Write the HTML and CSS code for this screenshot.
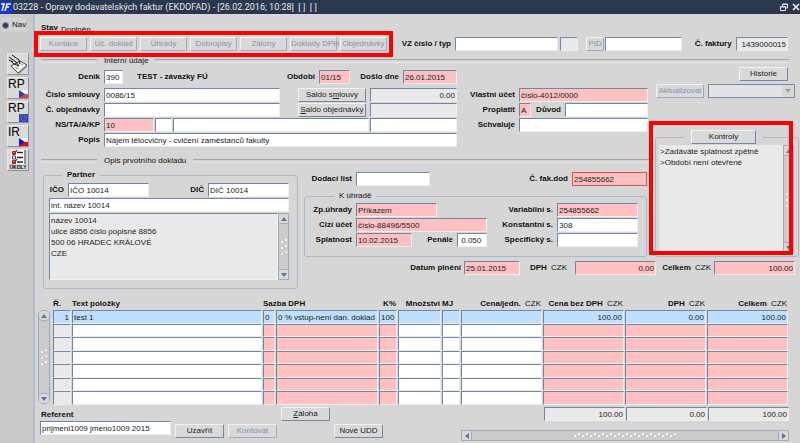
FILE: index.html
```html
<!DOCTYPE html>
<html lang="cs">
<head>
    <meta charset="UTF-8">
    <meta name="viewport" content="width=device-width, initial-scale=1.0">
    <title>Opravy dodavatelských faktur</title>
    <link rel="stylesheet" href="styles.css">
</head>
<body>
    <svg class="defs" width="0" height="0">
        <symbol id="up" viewBox="0 0 6 4"><path d="M0 4L3 0L6 4Z" fill="#5b7596"/></symbol>
        <symbol id="down" viewBox="0 0 6 4"><path d="M0 0H6L3 4Z" fill="#5b7596"/></symbol>
        <symbol id="left" viewBox="0 0 4 6"><path d="M4 0L0 3L4 6Z" fill="#5b7596"/></symbol>
        <symbol id="right" viewBox="0 0 4 6"><path d="M0 0L4 3L0 6Z" fill="#5b7596"/></symbol>
    </svg>

    <header class="titlebar">
        <svg class="logo" viewBox="0 0 12 13">
            <rect width="12" height="13" fill="#1436d8"/>
            <path d="M1 3H5M4 3L2 10M5 10L7 3H11M6 6H9" fill="none" stroke="#fff" stroke-width="1.5"/>
        </svg>
        <h1>03228 - Opravy dodavatelských faktur (EKDOFAD) - [26.02.2016; 10:28]&nbsp; [ ]&nbsp; [ ]</h1>
        <button class="win-btn" aria-label="Obnovit">
            <svg viewBox="0 0 8 8"><path d="M2.5 3V1H7.5V5H6M0.5 3.5H5.5V7.5H0.5ZM2.5 1.5H7.5M0.5 4H5.5" fill="none" stroke="#dfe3ea"/></svg>
        </button>
        <button class="win-btn" aria-label="Zavřít">
            <svg viewBox="0 0 8 8"><path d="M1 1L7 7M7 1L1 7" fill="none" stroke="#eef0f4" stroke-width="1.6"/></svg>
        </button>
    </header>

    <div class="window">
        <nav class="sidebar">
            <label class="nav-radio"><input type="radio" name="nav" checked> Nav</label>
            <button class="tool" aria-label="Podpis">
                <svg viewBox="0 0 20 20">
                    <path d="M3 12L12 7L19 11L10 19Z" fill="#f4f4ee" stroke="#444"/>
                    <path d="M10 19L19 11V13L11 20Z" fill="#888"/>
                    <path d="M1 3L8 8L11 12L6 10L3 7M4 1L11 6L12 10M1 6L5 8" fill="none" stroke="#111"/>
                    <path d="M7 13L11 15M12 9L15 11" fill="none" stroke="#999"/>
                </svg>
            </button>
            <button class="tool" aria-label="RP česká">
                <svg viewBox="0 0 20 20">
                    <text x="0" y="10">RP</text>
                    <path d="M11 12H20V16H11Z" fill="#fff"/><path d="M11 16H20V20H11Z" fill="#e33b48"/><path d="M11 12L17 16L11 20Z" fill="#2b3fc4"/>
                </svg>
            </button>
            <button class="tool" aria-label="RP evropská">
                <svg viewBox="0 0 20 20">
                    <text x="0" y="10">RP</text>
                    <rect x="11" y="12" width="9" height="8" fill="#3148c0"/>
                    <circle cx="15.5" cy="16" r="2.5" fill="none" stroke="#8a8f80" stroke-dasharray="1 1"/>
                </svg>
            </button>
            <button class="tool" aria-label="IR česká">
                <svg viewBox="0 0 20 20">
                    <text x="0" y="10">IR</text>
                    <path d="M11 12H20V16H11Z" fill="#fff"/><path d="M11 16H20V20H11Z" fill="#f00"/><path d="M11 12L17 16L11 20Z" fill="#0a1ae0"/>
                </svg>
            </button>
            <button class="tool" aria-label="Úkoly">
                <svg viewBox="0 0 20 20">
                    <rect x="3" y="0" width="14" height="14" fill="#fff"/>
                    <path d="M4.5 1.5H7.5V4.5H4.5ZM4.5 6H7.5V9H4.5ZM4.5 10.5H7.5V13.5H4.5Z" fill="none" stroke="#444"/>
                    <path d="M9 2.5H15M9 7.5H15M9 12H15" stroke="#222" stroke-width="1.5"/>
                    <path d="M17 0V14" stroke="#333"/>
                    <path d="M4 2L6 4L9 0M4 11L6 13L9 9" fill="none" stroke="#e00" stroke-width="1.3"/>
                    <text class="tasks" x="10" y="19">ÚKOLY</text>
                </svg>
            </button>
        </nav>

        <main class="content">
            <div class="status"><b>Stav</b><span>Doplněn</span></div>

            <div class="toolbar">
                <div class="tabs">
                    <button disabled>Kontace</button>
                    <button disabled>Úč. doklad</button>
                    <button disabled>Úhrady</button>
                    <button disabled>Dobropisy</button>
                    <button disabled>Zálohy</button>
                    <button disabled>Doklady DPH</button>
                    <button disabled>Objednávky</button>
                </div>
                <label for="vz">VZ číslo / typ</label>
                <div class="pair">
                    <input id="vz" type="text">
                    <input class="readonly" type="text" aria-label="VZ typ" readonly>
                </div>
                <div class="pid">
                    <button disabled>PID</button>
                    <input type="text" aria-label="PID">
                </div>
                <label for="faktura">Č. faktury</label>
                <input id="faktura" class="readonly num" type="text" value="1439000015" readonly>
            </div>

            <h2 class="rule">Interní údaje</h2>

            <div class="form">
                <section class="internal">
                    <div class="rows">
                        <div class="row row-journal">
                            <label for="denik">Deník</label>
                            <input id="denik" type="text" value="390">
                            <b class="journal-name">TEST - závazky FÚ</b>
                            <label for="obdobi">Období</label>
                            <input id="obdobi" class="required" type="text" value="01/15">
                            <label for="doslo">Došlo dne</label>
                            <input id="doslo" class="required" type="text" value="26.01.2015">
                        </div>
                        <div class="row row-balance">
                            <label for="smlouva">Číslo smlouvy</label>
                            <input id="smlouva" type="text" value="0086/15">
                            <button>Saldo s<u>m</u>louvy</button>
                            <input class="readonly num" type="text" aria-label="Saldo smlouvy" value="0.00" readonly>
                        </div>
                        <div class="row row-balance">
                            <label for="objednavka">Č. objednávky</label>
                            <input id="objednavka" type="text">
                            <button><u>S</u>aldo objednávky</button>
                            <input class="readonly" type="text" aria-label="Saldo objednávky" readonly>
                        </div>
                        <div class="row">
                            <label for="ns">NS/TA/A/KP</label>
                            <div class="codes">
                                <input id="ns" class="required" type="text" value="10">
                                <input type="text" aria-label="TA">
                                <input type="text" aria-label="A">
                                <input type="text" aria-label="KP">
                            </div>
                        </div>
                        <div class="row">
                            <label for="popis">Popis</label>
                            <input id="popis" type="text" value="Nájem tělocvičny - cvičení zaměstanců fakulty">
                        </div>
                    </div>
                    <div class="rows account">
                        <div class="row">
                            <label for="ucet">Vlastní účet</label>
                            <input id="ucet" class="required" type="text" value="číslo-4012/0000">
                        </div>
                        <div class="row row-reason">
                            <label for="proplatit">Proplatit</label>
                            <input id="proplatit" class="required" type="text" value="A">
                            <label for="duvod">Důvod</label>
                            <input id="duvod" type="text">
                        </div>
                        <div class="row">
                            <label for="schvaluje">Schvaluje</label>
                            <input id="schvaluje" type="text">
                        </div>
                    </div>
                </section>

                <aside class="side">
                    <button class="history">Historie</button>
                    <div class="update">
                        <button disabled>Aktualizovat</button>
                        <div class="select">
                            <select aria-label="Aktualizovat" disabled><option></option></select>
                            <svg><use href="#down"/></svg>
                        </div>
                    </div>
                    <div class="checks">
                        <fieldset>
                            <legend><button>Kontroly</button></legend>
                            <div class="scroll-area">
                                <textarea class="readonly" aria-label="Kontroly" readonly>&gt;Zadáváte splatnost zpětně
&gt;Období není otevřené</textarea>
                                <div class="scrollbar">
                                    <button aria-label="Nahoru"><svg><use href="#up"/></svg></button>
                                    <span class="thumb"></span>
                                    <button aria-label="Dolů"><svg><use href="#down"/></svg></button>
                                </div>
                            </div>
                        </fieldset>
                        <div class="marker"></div>
                    </div>
                </aside>

                <h2 class="rule rule-source">Opis prvotního dokladu</h2>

                <fieldset class="partner">
                    <legend><b>Partner</b></legend>
                    <div class="row row-ids">
                        <label for="ico">IČO</label>
                        <input id="ico" type="text" value="IČO 10014">
                        <label for="dic">DIČ</label>
                        <input id="dic" type="text" value="DIČ 10014">
                    </div>
                    <input type="text" aria-label="Interní název" value="int. název 10014">
                    <div class="scroll-area">
                        <textarea class="readonly" aria-label="Adresa partnera" readonly>název 10014
ulice 8856 číslo popisné 8856
500 06 HRADEC KRÁLOVÉ
CZE</textarea>
                        <div class="scrollbar">
                            <button aria-label="Nahoru"><svg><use href="#up"/></svg></button>
                            <span class="thumb"></span>
                            <button aria-label="Dolů"><svg><use href="#down"/></svg></button>
                        </div>
                    </div>
                </fieldset>

                <section class="source">
                    <div class="row row-delivery">
                        <label for="dodaci">Dodací list</label>
                        <input id="dodaci" type="text">
                        <label for="fakdod">Č. fak.dod</label>
                        <input id="fakdod" class="required alert" type="text" value="254855662">
                    </div>
                    <fieldset class="payment">
                        <legend>K úhradě</legend>
                        <div class="row row-payment">
                            <label for="zpusob">Zp.úhrady</label>
                            <div class="method"><input id="zpusob" class="required" type="text" value="Příkazem"></div>
                            <label for="vs">Variabilní s.</label>
                            <input id="vs" class="required" type="text" value="254855662">
                        </div>
                        <div class="row row-payment">
                            <label for="cizi">Cizí účet</label>
                            <input id="cizi" class="required" type="text" value="číslo-88496/5500">
                            <label for="ks">Konstantní s.</label>
                            <input id="ks" type="text" value="308">
                        </div>
                        <div class="row row-payment">
                            <label for="splatnost">Splatnost</label>
                            <div class="row row-due">
                                <input id="splatnost" class="required" type="text" value="10.02.2015">
                                <label for="penale">Penále</label>
                                <input id="penale" type="text" value=" 0.050">
                            </div>
                            <label for="ss">Specifický s.</label>
                            <input id="ss" type="text">
                        </div>
                    </fieldset>
                </section>

                <section class="row totals">
                    <label for="plneni">Datum plnění</label>
                    <input id="plneni" class="required" type="text" value="25.01.2015">
                    <label class="money" for="dph">DPH <small>CZK</small></label>
                    <input id="dph" class="required num" type="text" value="0.00">
                    <label for="celkem">Celkem <small>CZK</small></label>
                    <input id="celkem" class="required num" type="text" value="100.00">
                </section>
            </div>

            <section class="items">
                <div class="scrollbar round">
                    <button aria-label="Nahoru"><svg><use href="#up"/></svg></button>
                    <span class="thumb"></span>
                    <button aria-label="Dolů"><svg><use href="#down"/></svg></button>
                </div>
                <table>
                    <colgroup>
                        <col class="col-small"><col><col class="col-rate"><col class="col-rate-name"><col class="col-small">
                        <col class="col-qty"><col class="col-small"><col class="col-money"><col class="col-money"><col class="col-money"><col class="col-money">
                    </colgroup>
                    <thead>
                        <tr>
                            <th>Ř.</th>
                            <th>Text položky</th>
                            <th colspan="2">Sazba DPH</th>
                            <th class="end">K%</th>
                            <th class="end">Množství</th>
                            <th>MJ</th>
                            <th class="end">Cena/jedn. <small>CZK</small></th>
                            <th class="end">Cena bez DPH <small>CZK</small></th>
                            <th class="end">DPH <small>CZK</small></th>
                            <th class="end">Celkem <small>CZK</small></th>
                        </tr>
                    </thead>
                    <tbody id="items"></tbody>
                </table>
            </section>

            <footer class="bottom">
                <label class="ref-label" for="referent">Referent</label>
                <input id="referent" class="referent" type="text" value="prijmeni1009 jmeno1009 2015">
                <button class="close-btn">Uzavřít</button>
                <button class="post-btn" disabled>Kontovat</button>
                <button class="advance-btn"><u>Z</u>áloha</button>
                <button class="udd-btn">Nové UDD</button>
                <div class="sums">
                    <input class="readonly num" type="text" aria-label="Součet bez DPH" value="100.00" readonly>
                    <input class="readonly num" type="text" aria-label="Součet DPH" value="0.00" readonly>
                    <input class="readonly num" type="text" aria-label="Součet celkem" value="100.00" readonly>
                </div>
                <div class="scrollbar horizontal">
                    <button aria-label="Vlevo"><svg><use href="#left"/></svg></button>
                    <span class="thumb"></span>
                    <button aria-label="Vpravo"><svg><use href="#right"/></svg></button>
                </div>
            </footer>
        </main>
    </div>

    <script src="script.js"></script>
</body>
</html>
```

FILE: styles.css
```css
* {
    box-sizing: border-box;
}

body {
    margin: 0;
    min-height: 100vh;
    display: flex;
    flex-direction: column;
    background-color: #d6d6d6;
    color: #111;
    font: 8px/10px "Liberation Sans", Arial, sans-serif;
}

.defs {
    position: absolute;
}

/* title bar */
.titlebar {
    display: flex;
    align-items: center;
    height: 14px;
    background-color: #29384f;
    color: #e4e7ec;
}

.logo {
    width: 12px;
    height: 13px;
}

.titlebar h1 {
    flex: 1;
    margin: 0 0 0 1px;
    font: 9px Roboto, "Liberation Sans", sans-serif;
    white-space: nowrap;
}

.win-btn {
    width: 8px;
    height: 8px;
    margin-left: 4px;
    padding: 0;
    border: none;
    background: none;
}

.win-btn svg {
    display: block;
    width: 8px;
    height: 8px;
}

.window {
    flex: 1;
    display: flex;
}

/* left tool strip */
.sidebar {
    display: flex;
    flex-direction: column;
    align-items: flex-start;
    gap: 2px;
    width: 35px;
    padding: 4px 0 0 7px;
    background-color: #cacaca;
    border-right: 2px solid #b3bcc9;
}

.nav-radio {
    display: flex;
    align-items: center;
    gap: 2px;
    height: 14px;
    margin: 0 0 19px -6px;
    background-color: #d2d2d2;
}

.nav-radio input {
    appearance: none;
    width: 7px;
    height: 7px;
    margin: 0 1px;
    border: 1px solid #8292a8;
    border-radius: 50%;
    background-color: #2d3d55;
}

.tool {
    width: 22px;
    height: 22px;
    padding: 0;
    border: 1px solid #e9e9e9;
    border-right-color: #8092aa;
    border-bottom-color: #8092aa;
    background-color: #dadada;
}

.tool svg {
    display: block;
    width: 20px;
    height: 20px;
}

.tool text {
    font: 12px "Liberation Sans", Arial, sans-serif;
}

.tool .tasks {
    font-size: 5px;
    font-weight: bold;
    text-anchor: middle;
}

/* controls */
.content {
    flex: 1;
    min-width: 0;
    padding-left: 5px;
}

input[type="text"],
textarea,
select {
    width: 100%;
    min-width: 0;
    height: 14px;
    margin: 0;
    padding: 0 1px;
    border: 1px solid #6e87a8;
    border-right-color: #efefef;
    border-bottom-color: #efefef;
    border-radius: 0;
    background-color: #fff;
    color: #222;
    font: inherit;
}

textarea {
    padding-top: 1px;
    line-height: 11px;
    resize: none;
    overflow: hidden;
}

input.required {
    background-color: #ffc0c0;
}

input.readonly,
textarea.readonly {
    background-color: #e9e9e9;
}

input.num {
    text-align: right;
}

input.alert {
    border-color: #e84a50;
}

.content button {
    height: 14px;
    padding: 0;
    border: 1px solid #f2f2f2;
    border-right-color: #7087a5;
    border-bottom-color: #7087a5;
    border-radius: 1px;
    background-color: #d9d9d9;
    color: #222;
    font: inherit;
    white-space: nowrap;
}

.content button:disabled {
    color: #8094ab;
    border-right-color: #9aabc0;
    border-bottom-color: #9aabc0;
}

label {
    white-space: nowrap;
}

.content label {
    font-weight: bold;
    text-align: right;
}

small {
    margin-left: 2px;
    font-size: 8px;
    font-weight: normal;
}

/* header rows */
.status {
    display: flex;
    gap: 3px;
    height: 17px;
    padding: 9px 0 0 1px;
}

.status span {
    margin-top: 2px;
}

.toolbar {
    position: relative;
    display: grid;
    grid-template-columns: 359px 62px 120fr 101fr 54px 51fr;
    align-items: center;
    margin: 0 12px 0 -6px;
}

.toolbar > label {
    padding-right: 4px;
}

.tabs {
    display: flex;
    gap: 3px;
    padding: 2px;
    border: 4px solid #f00;
    background-color: #d6d6d6;
}

.tabs button {
    flex: 1 1 0;
    min-width: 0;
}

.pair {
    display: grid;
    grid-template-columns: 1fr 18px;
    gap: 2px;
}

.pid {
    display: grid;
    grid-template-columns: 18px 1fr;
    gap: 1px;
    padding-left: 8px;
}

.rule {
    display: flex;
    align-items: center;
    gap: 7px;
    height: 10px;
    margin: -1px 11px 1px 1px;
    font-size: 8px;
    font-weight: normal;
}

.rule::before,
.rule::after {
    content: "";
    width: 56px;
    height: 2px;
    border-top: 1px solid #a5a5a5;
    border-bottom: 1px solid #e6e6e6;
}

.rule::after {
    flex: 1;
}

/* form */
.form {
    display: grid;
    grid-template-columns: 264fr 345fr 151fr;
    grid-template-rows: 88px 15px 91px 30px;
    grid-template-areas:
        "internal internal side"
        "rule rule side"
        "partner source side"
        "partner totals totals";
}

.internal {
    grid-area: internal;
    display: grid;
    grid-template-columns: 417fr 192fr;
    padding-top: 3px;
}

.rows {
    display: flex;
    flex-direction: column;
    gap: 1px;
}

.row {
    display: grid;
    grid-template-columns: 60px 1fr;
    column-gap: 4px;
    align-items: center;
}

.row-journal {
    grid-template-columns: 60px 19px 1fr auto 31px 45px 54px;
    margin-bottom: 3px;
}

.journal-name {
    padding-left: 10px;
}

.row-balance {
    grid-template-columns: 60px 1fr 82px 87px;
}

.row-balance button {
    justify-self: end;
    width: 68px;
}

.codes {
    display: grid;
    grid-template-columns: 50fr 17fr 196fr 87px;
    gap: 1px;
}

.account {
    padding: 18px 1px 0 0;
}

.account .row {
    grid-template-columns: 58px 1fr;
}

.account .row-reason {
    grid-template-columns: 58px 12px 26px 1fr;
}

.side {
    grid-area: side;
    display: flex;
    flex-direction: column;
}

.history {
    align-self: flex-end;
    width: 49px;
    margin-right: 12px;
}

.update {
    display: grid;
    grid-template-columns: 48px 1fr;
    gap: 4px;
    margin: 3px 5px 0 7px;
}

.select {
    display: grid;
    align-items: center;
}

.select select,
.select svg {
    grid-area: 1 / 1;
}

.select select {
    appearance: none;
    border-color: #7389a8;
    background-color: #e2e2e2;
    opacity: 1;
}

.select svg {
    justify-self: end;
    width: 12px;
    height: 12px;
    margin-right: 1px;
    padding: 4px 3px;
    background-color: #cfcfcf;
    opacity: 0.6;
    pointer-events: none;
}

.checks {
    position: relative;
    display: flex;
    height: 136px;
    margin-top: 23px;
    padding: 9px 1px 0 6px;
}

.checks .marker {
    position: absolute;
    inset: 0 7px 2px 0;
    border: 4px solid #f00;
    pointer-events: none;
}

fieldset {
    min-width: 0;
    margin: 0;
    border: 1px solid #a9b6c7;
    border-radius: 3px;
}

legend {
    padding: 0 5px;
}

.checks fieldset {
    flex: 1;
    padding: 1px 4px 2px 3px;
}

.checks legend {
    margin-left: 25px;
    padding: 0 7px;
}

.checks legend button {
    display: block;
    width: 65px;
}

.scroll-area {
    display: grid;
    grid-template-columns: 1fr 11px;
}

.checks textarea {
    height: 108px;
    border: none;
}

.rule-source {
    grid-area: rule;
    margin: 1px 0 0 1px;
}

.partner {
    grid-area: partner;
    display: flex;
    flex-direction: column;
    gap: 1px;
    height: 119px;
    margin: 0 6px 0 3px;
    padding: 3px 8px 0 5px;
}

.partner legend {
    margin-left: 13px;
}

.partner textarea {
    height: 67px;
}

.row-ids {
    grid-template-columns: 15px 81fr 51px 81fr;
}

.source {
    grid-area: source;
    padding: 2px 2px 0 0;
}

.row-delivery {
    grid-template-columns: 48px 74fr 134fr 75fr;
}

.payment {
    display: flex;
    flex-direction: column;
    gap: 1px;
    margin-top: 5px;
    padding: 2px 8px 9px 0;
}

.payment legend {
    margin-left: 29px;
}

.row-payment {
    grid-template-columns: 47px 131fr 62px 81fr;
}

.method {
    padding-right: 38%;
}

.row-due {
    grid-template-columns: 56fr 37px 30fr;
}

.totals {
    grid-area: totals;
    grid-template-columns: 157px 56fr 49px 81fr 52px 81fr;
    column-gap: 3px;
    align-items: start;
    padding-right: 5px;
}

.totals label {
    line-height: 14px;
}

.totals .money {
    padding-right: 5px;
}

/* scrollbars */
.scrollbar {
    display: flex;
    flex-direction: column;
    border: 1px solid #9dacbf;
    background-color: #cbcbcb;
}

.content .scrollbar button {
    display: flex;
    align-items: center;
    justify-content: center;
    height: 10px;
    border: none;
    border-bottom: 1px solid #9dacbf;
    background-color: #d8d8d8;
}

.content .scrollbar button:last-child {
    border-top: 1px solid #9dacbf;
    border-bottom: none;
}

.scrollbar svg {
    width: 6px;
    height: 4px;
}

.thumb {
    flex: 1;
    max-height: 18px;
    margin: auto 1px;
    background-image:
        radial-gradient(circle at 2px 4px, #f4f4f4 1px, transparent 1px),
        radial-gradient(circle at 6px 2px, #f4f4f4 1px, transparent 1px);
    background-size: 8px 6px;
}

.round {
    border-radius: 5px;
}

.content .round button {
    border-radius: 4px;
}

.horizontal {
    flex-direction: row;
    height: 11px;
}

.horizontal .thumb {
    max-width: 104px;
    max-height: none;
    margin: 1px auto;
}

.content .horizontal button {
    width: 10px;
    height: auto;
    border: none;
    border-right: 1px solid #9dacbf;
}

.content .horizontal button:last-child {
    border: none;
    border-left: 1px solid #9dacbf;
}

.horizontal svg {
    width: 4px;
    height: 6px;
}

/* invoice items */
.items {
    display: grid;
    grid-template-columns: 12px 1fr;
    gap: 3px;
    margin: 7px 11px 0 -2px;
}

.items .scrollbar {
    margin: 12px 0 1px;
}

.items table {
    width: 100%;
    table-layout: fixed;
    border-spacing: 0;
}

.items th {
    height: 12px;
    padding: 0;
    text-align: left;
    line-height: 10px;
    white-space: nowrap;
}

.items .end {
    padding-right: 2px;
    text-align: right;
}

.items td {
    padding: 0 1px 0 0;
}

.items td input {
    display: block;
}

.items tr:nth-child(even) input {
    height: 13px;
}

.items .current input {
    background-color: #bfdfff;
}

.col-small {
    width: 19px;
}

.col-rate {
    width: 13px;
}

.col-rate-name {
    width: 103px;
}

.col-qty {
    width: 44px;
}

.col-money {
    width: 82px;
}

/* bottom bar */
.bottom {
    display: grid;
    grid-template-columns: 131px 49px 49px 49px 49px 1fr;
    grid-template-rows: 14px 20px;
    column-gap: 4px;
    margin: 2px 11px 2px 0;
}

.bottom .ref-label {
    grid-area: 1 / 1;
    align-self: end;
    text-align: left;
    padding: 0 0 1px 1px;
}

.referent {
    grid-area: 2 / 1;
}

.close-btn {
    grid-area: 2 / 2;
    margin-top: 3px;
}

.post-btn {
    grid-area: 2 / 3;
    margin-top: 3px;
}

.advance-btn {
    grid-area: 1 / 4;
}

.udd-btn {
    grid-area: 2 / 5;
    margin-top: 3px;
}

.sums {
    grid-area: 1 / 6;
    justify-self: end;
    display: grid;
    grid-template-columns: repeat(3, 81px);
    gap: 1px;
}

.bottom .horizontal {
    grid-area: 2 / 6;
    align-self: end;
    margin-left: 74px;
}
```

FILE: script.js
```js
const columns = ["Řádek", "Text položky", "Sazba", "Název sazby", "K%", "Množství", "MJ", "Cena/jedn.", "Cena bez DPH", "DPH", "Celkem"];
const required = [2, 3, 4, 8, 9, 10];
const numeric = [0, 7, 8, 9, 10];
const rows = [
    ["1", "test 1", "0", "0 % vstup-není dan. doklad - n", "100", "", "", "", "100.00", "0.00", "100.00"],
    [], [], [], [], [], []
];

const body = document.getElementById("items");
rows.forEach((values, index) => {
    const tr = body.insertRow();
    if (index === 0) tr.className = "current";
    columns.forEach((name, i) => {
        const input = document.createElement("input");
        input.type = "text";
        input.value = values[i] || "";
        input.setAttribute("aria-label", name + " " + (index + 1));
        if (i === 0) {
            input.classList.add("readonly");
            input.readOnly = true;
        }
        if (required.includes(i)) input.classList.add("required");
        if (numeric.includes(i)) input.classList.add("num");
        tr.insertCell().appendChild(input);
    });
});
```
